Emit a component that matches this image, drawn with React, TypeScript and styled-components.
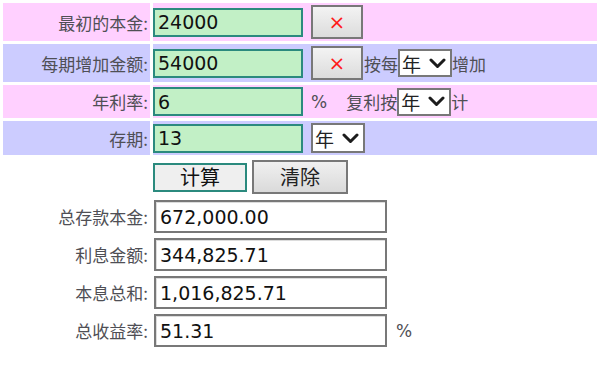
import React from 'react'
import styled, { createGlobalStyle } from 'styled-components'

const colors = {
  pink: '#ffd0ff',
  blue: '#ccccff',
  field: '#c2f0c6',
  teal: '#2b8a7e',
  gray: '#787878',
  label: '#4f4f55',
}

type Tone = 'pink' | 'blue' | 'none'

const toneBg = (tone: Tone) =>
  tone === 'pink' ? colors.pink : tone === 'blue' ? colors.blue : 'transparent'

const GlobalStyle = createGlobalStyle`
  html, body {
    margin: 0;
    padding: 0;
    background: #fff;
  }
  body {
    font-family: "DejaVu Sans", "Noto Sans CJK SC", sans-serif;
  }
`

const Chevron = () => (
  <svg width="17" height="11" viewBox="0 0 17 11">
    <path d="M2 2 L8.5 8.5 L15 2" fill="none" stroke="#1c1c1c" strokeWidth="3" strokeLinecap="round" strokeLinejoin="round" />
  </svg>
)

const App: React.FC = () => {
  return (
    <>
      <GlobalStyle />
      <StyledForm>
        <StyledRow>
          <StyledLabel $tone={'pink'}>最初的本金:</StyledLabel>
          <StyledField $tone={'pink'}>
            <StyledInput defaultValue={'24000'} />
            <StyledClearButton>×</StyledClearButton>
          </StyledField>
        </StyledRow>
        <StyledRow>
          <StyledLabel $tone={'blue'}>每期增加金额:</StyledLabel>
          <StyledField $tone={'blue'}>
            <StyledInput defaultValue={'54000'} />
            <StyledClearButton>×</StyledClearButton>
            <StyledText $gap={1}>按每</StyledText>
            <StyledSelect>年<Chevron /></StyledSelect>
            <StyledText>增加</StyledText>
          </StyledField>
        </StyledRow>
        <StyledRow>
          <StyledLabel $tone={'pink'}>年利率:</StyledLabel>
          <StyledField $tone={'pink'}>
            <StyledInput defaultValue={'6'} />
            <StyledPercent $gap={8}>%</StyledPercent>
            <StyledText $gap={19}>复利按</StyledText>
            <StyledSelect>年<Chevron /></StyledSelect>
            <StyledText>计</StyledText>
          </StyledField>
        </StyledRow>
        <StyledRow>
          <StyledLabel $tone={'blue'}>存期:</StyledLabel>
          <StyledField $tone={'blue'}>
            <StyledInput defaultValue={'13'} />
            <StyledSelect $gap={8} $tall>年<Chevron /></StyledSelect>
          </StyledField>
        </StyledRow>
        <StyledRow>
          <div />
          <StyledActions>
            <StyledCalcButton>计算</StyledCalcButton>
            <StyledResetButton>清除</StyledResetButton>
          </StyledActions>
        </StyledRow>
        <StyledRow>
          <StyledLabel $tone={'none'}>总存款本金:</StyledLabel>
          <StyledResultField>
            <StyledResult>672,000.00</StyledResult>
          </StyledResultField>
        </StyledRow>
        <StyledRow>
          <StyledLabel $tone={'none'}>利息金额:</StyledLabel>
          <StyledResultField>
            <StyledResult>344,825.71</StyledResult>
          </StyledResultField>
        </StyledRow>
        <StyledRow>
          <StyledLabel $tone={'none'}>本息总和:</StyledLabel>
          <StyledResultField>
            <StyledResult>1,016,825.71</StyledResult>
          </StyledResultField>
        </StyledRow>
        <StyledRow>
          <StyledLabel $tone={'none'}>总收益率:</StyledLabel>
          <StyledResultField>
            <StyledResult>51.31</StyledResult>
            <StyledPercent $gap={9}>%</StyledPercent>
          </StyledResultField>
        </StyledRow>
      </StyledForm>
    </>
  )
}

export default App

const StyledForm = styled.div`
  display: flex;
  flex-direction: column;
  gap: 3px;
  width: 600px;
  padding: 3px 3px 0;
  box-sizing: border-box;
`

const StyledRow = styled.div`
  display: grid;
  grid-template-columns: 147px 1fr;
  column-gap: 3px;
`

const StyledLabel = styled.div<{ $tone: Tone }>`
  display: flex;
  align-items: center;
  justify-content: flex-end;
  padding-right: 2px;
  background: ${({ $tone }) => toneBg($tone)};
  color: ${colors.label};
  font-family: "Noto Sans CJK SC", sans-serif;
  font-size: 17px;
`

const StyledField = styled.div<{ $tone: Tone }>`
  display: flex;
  align-items: center;
  min-height: 33px;
  padding: 2px 0;
  box-sizing: border-box;
  background: ${({ $tone }) => toneBg($tone)};
`

const StyledInput = styled.input`
  width: 150px;
  height: 29px;
  box-sizing: border-box;
  margin: 0;
  padding: 0 3px;
  border: 2px solid ${colors.teal};
  background: ${colors.field};
  color: #111;
  font-family: "DejaVu Sans", sans-serif;
  font-size: 19px;
  outline: none;
`

const StyledClearButton = styled.button`
  width: 52px;
  height: 34px;
  margin: 0 0 0 8px;
  padding: 0;
  border: 2px solid ${colors.gray};
  background: linear-gradient(#f3f3f3, #dcdcdc);
  color: #ff1a1a;
  font-family: "DejaVu Sans", sans-serif;
  font-size: 20px;
  line-height: 1;
`

const StyledText = styled.span<{ $gap?: number }>`
  margin-left: ${({ $gap }) => $gap || 0}px;
  color: ${colors.label};
  font-family: "Noto Sans CJK SC", sans-serif;
  font-size: 17px;
`

const StyledPercent = styled.span<{ $gap?: number }>`
  margin-left: ${({ $gap }) => $gap || 0}px;
  color: ${colors.label};
  font-family: "DejaVu Sans", sans-serif;
  font-size: 17px;
`

const StyledSelect = styled.span<{ $gap?: number; $tall?: boolean }>`
  display: inline-flex;
  align-items: center;
  justify-content: space-between;
  width: 54px;
  height: ${({ $tall }) => ($tall ? 30 : 28)}px;
  margin-left: ${({ $gap }) => $gap || 0}px;
  padding: 0 4px 0 2px;
  box-sizing: border-box;
  border: 2px solid ${colors.gray};
  background: #fff;
  color: #222;
  font-family: "Noto Sans CJK SC", sans-serif;
  font-size: 19px;
`

const StyledActions = styled.div`
  display: flex;
  align-items: center;
  gap: 5px;
  padding: 2px 0;
`

const StyledCalcButton = styled.button`
  width: 94px;
  height: 29px;
  margin: 0;
  padding: 0;
  border: 2px solid ${colors.teal};
  background: #efefef;
  color: #111;
  font-family: "Noto Sans CJK SC", sans-serif;
  font-size: 20px;
  line-height: 1;
`

const StyledResetButton = styled.button`
  width: 96px;
  height: 34px;
  margin: 0;
  padding: 0;
  border: 2px solid ${colors.gray};
  background: linear-gradient(#f0f0f0, #dadada);
  color: #222;
  font-family: "Noto Sans CJK SC", sans-serif;
  font-size: 20px;
  line-height: 1;
`

const StyledResultField = styled.div`
  display: flex;
  align-items: center;
  padding: 1px 0 1px 1px;
`

const StyledResult = styled.div`
  display: flex;
  align-items: center;
  width: 233px;
  height: 33px;
  box-sizing: border-box;
  padding: 0 4px;
  border: 2px solid ${colors.gray};
  box-shadow: inset 1px 1px 0 #dcdcdc;
  background: #fff;
  color: #111;
  font-family: "DejaVu Sans", sans-serif;
  font-size: 19px;
`
